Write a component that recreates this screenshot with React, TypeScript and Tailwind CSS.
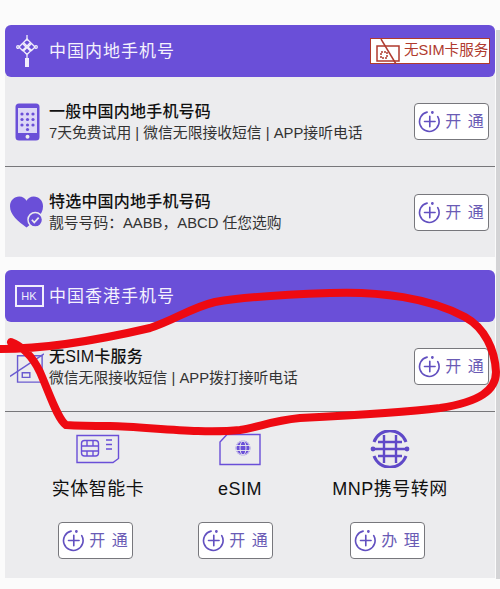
import React from "react";

const PURPLE = "#6a4fd8";

function PlusCircle() {
  return (
    <svg width="23" height="23" viewBox="0 0 24 24" fill="none" stroke="#6250c0" strokeWidth="1.7" strokeLinecap="round">
      <path d="M9.500 2.200A10.200 10.200 0 1 0 20.600 7" />
      <circle cx="15" cy="2.600" r="0.600" fill="#6250c0" />
      <path d="M12.300 6.500v11M6.800 12h11" />
    </svg>
  );
}

function OpenBtn({ label = "开 通" }: { label?: string }) {
  return (
    <button className="w-[75px] h-[37px] shrink-0 flex items-center justify-center gap-[4px] bg-white border border-[#77777c] rounded-[4px] text-[#6a5bb5] text-[16px] tracking-[1px]">
      <PlusCircle />
      <span className="pt-[1px]">{label}</span>
    </button>
  );
}

function Row({ icon, title, sub, divider }: { icon: React.ReactNode; title: string; sub: string; divider?: boolean }) {
  return (
    <div className={`h-[90px] flex items-center pl-[5px] pr-[6px] ${divider ? "border-b border-[#77777a]" : ""}`}>
      <div className="w-[34px] flex justify-center shrink-0">{icon}</div>
      <div className="ml-[5px] flex-1 min-w-0">
        <div className="pt-[1px] text-[16px] tracking-[0.2px] leading-[22px] font-medium text-[#111]">{title}</div>
        <div className="text-[14.8px] leading-[21px] text-[#333] whitespace-nowrap">{sub}</div>
      </div>
      <OpenBtn />
    </div>
  );
}

function Header({ icon, title, right }: { icon: React.ReactNode; title: string; right?: React.ReactNode }) {
  return (
    <div className="h-[52px] rounded-[6px] flex items-center pl-[5px] pr-[5px]" style={{ backgroundColor: PURPLE }}>
      <div className="w-[34px] flex justify-center shrink-0">{icon}</div>
      <div className="ml-[5px] pt-[1px] flex-1 text-[17px] tracking-[1px] text-[#f4f2fd]">{title}</div>
      {right}
    </div>
  );
}

function KnotIcon() {
  return (
    <svg width="22" height="32" viewBox="0 0 22 32" fill="none" stroke="#f1eefc" strokeWidth="1.300">
      <path d="M11 0v6M11 20v3" />
      <path d="M11 4l3.500 3.500L11 11 7.500 7.500zM6.500 8.500L10 12l-3.500 3.500L3 12zM15.500 8.500L19 12l-3.500 3.500L12 12zM11 12.500l3.500 3.500L11 19.500 7.500 16z" />
      <circle cx="2" cy="12" r="1.300" />
      <circle cx="20" cy="12" r="1.300" />
      <rect x="9" y="23" width="4" height="9" fill="#f1eefc" stroke="none" />
    </svg>
  );
}

function PhoneIcon() {
  return (
    <svg width="25" height="38" viewBox="0 0 25 38">
      <rect x="0.500" y="0.500" width="24" height="37" rx="3.500" fill={PURPLE} />
      <rect x="3" y="5" width="19" height="25" fill="#dcd7f6" />
      {[0, 1, 2].map((r) =>
        [0, 1, 2].map((c) => <circle key={`${r}${c}`} cx={7 + c * 5.5} cy={11 + r * 5.5} r="1.600" fill={PURPLE} />)
      )}
      <circle cx="12.500" cy="26.500" r="1.600" fill={PURPLE} />
      <circle cx="12.500" cy="33.800" r="2" fill="#ececee" />
    </svg>
  );
}

function HeartIcon() {
  return (
    <svg width="35" height="33" viewBox="0 0 35 33">
      <path d="M17 32C8 25 0 19 0 10 0 4 4.500 0 9.500 0 13 0 15.500 1.800 17 4.500 18.500 1.800 21 0 24.500 0 29.500 0 34 4 34 10 34 19 26 25 17 32z" fill={PURPLE} />
      <circle cx="26" cy="24" r="7.500" fill="#6a4fd8" stroke="#ececee" strokeWidth="1.500" />
      <path d="M22.500 24l2.500 2.800 4.500-5" stroke="#ececee" strokeWidth="1.800" fill="none" />
    </svg>
  );
}

function NoSimIcon() {
  return (
    <svg width="36" height="36" viewBox="0 0 36 36" fill="none" stroke="#6a5bd0" strokeWidth="1.500">
      <path d="M8 6h26v28H8zM13 24h8v5h-8z" />
      <path d="M0 28L36 4" />
    </svg>
  );
}

function SimIcon() {
  return (
    <svg width="44" height="30" viewBox="0 0 44 30" fill="none" stroke="#6a4fd8" strokeWidth="1.400">
      <path d="M1 1.500h41.500v23L37 28.500H1z" />
      <rect x="5.500" y="6.500" width="17" height="15.500" rx="3" />
      <path d="M5.500 12h17M5.500 17h17M11 6.500V12M17 6.500V12M11 17v5M17 17v5" />
      <path d="M30 6h6M30 10.500h6M30 15h6" />
    </svg>
  );
}

function ESimIcon() {
  return (
    <svg width="42" height="33" viewBox="0 0 42 33" fill="none" stroke="#6a4fd8" strokeWidth="1.400">
      <path d="M8 1.500H41v30H1V9z" />
      <circle cx="24" cy="15" r="7.500" fill="#6a4fd8" stroke="none" />
      <g stroke="#ececee" strokeWidth="0.900">
        <circle cx="24" cy="15" r="7" />
        <ellipse cx="24" cy="15" rx="3" ry="7" />
        <path d="M17 12.500h14M17 17.500h14" />
      </g>
    </svg>
  );
}

function GlobeIcon() {
  return (
    <svg width="40" height="38" viewBox="0 0 40 38" fill="none" stroke="#5f49c8" strokeWidth="2.600">
      <path d="M4 12A17 17 0 0 1 36 12M36 26A17 17 0 0 1 4 26" strokeWidth="3" />
      <path d="M14 5v28M26 5v28M8 12h24M3 19h34M8 26h24" strokeWidth="2.400" />
      <circle cx="3" cy="19" r="2.400" fill="#5f49c8" stroke="none" />
      <circle cx="37" cy="19" r="2.400" fill="#5f49c8" stroke="none" />
    </svg>
  );
}

function Bottom({ icon, label, btn, btnClass }: { icon: React.ReactNode; label: string; btn?: string; btnClass: string }) {
  return (
    <div className="flex flex-col items-center">
      <div className="h-[40px] flex items-center">{icon}</div>
      <div className="mt-[5px] h-[30px] leading-[30px] text-[18px] tracking-[0.5px] text-[#111] whitespace-nowrap">{label}</div>
      <div className={`mt-[18px] ${btnClass}`}>
        <OpenBtn label={btn} />
      </div>
    </div>
  );
}

export default function App() {
  return (
    <div
      className="relative w-[500px] h-[589px] overflow-hidden bg-[#fbfbfb] pt-[25px] pl-[5px]"
      style={{ fontFamily: '"Liberation Sans", "Noto Sans CJK SC", sans-serif' }}
    >
      <div className="w-[490px] bg-[#ececee] rounded-t-[6px]">
        <Header
          icon={<KnotIcon />}
          title="中国内地手机号"
          right={
            <div className="w-[120px] h-[26px] bg-white border border-[#b03a2e] flex items-center pl-[5px] gap-[4px] text-[#b03a2e] text-[14.6px] whitespace-nowrap">
              <svg width="24" height="25" viewBox="0 0 24 25" fill="none" stroke="#b03a2e" strokeWidth="1.500" className="shrink-0">
                <path d="M1 7h22v15H1z" />
                <path d="M5 13h6v6H5z" strokeDasharray="2 1" />
                <path d="M5 0l15 25" />
              </svg>
              <span>无SIM卡服务</span>
            </div>
          }
        />
        <Row icon={<PhoneIcon />} title="一般中国内地手机号码" sub="7天免费试用 | 微信无限接收短信 | APP接听电话" divider />
        <Row icon={<HeartIcon />} title="特选中国内地手机号码" sub="靓号号码：AABB，ABCD 任您选购" />
      </div>

      <div className="w-[490px] mt-[13px] pb-[19px] bg-[#ececee] rounded-t-[6px]">
        <Header
          icon={
            <div className="w-[29px] h-[22px] ml-[4px] border-2 border-[#f1eefc] flex items-center justify-center text-[11px] font-medium text-[#f1eefc] leading-none">
              HK
            </div>
          }
          title="中国香港手机号"
        />
        <Row icon={<NoSimIcon />} title="无SIM卡服务" sub="微信无限接收短信 | APP拨打接听电话" divider />
        <div className="grid grid-cols-[186px_98px_202px] pt-[17px]">
          <Bottom icon={<SimIcon />} label="实体智能卡" btnClass="mr-[5px]" />
          <Bottom icon={<ESimIcon />} label="eSIM" btnClass="mr-[9px]" />
          <Bottom icon={<GlobeIcon />} label="MNP携号转网" btn="办 理" btnClass="mr-[5px]" />
        </div>
      </div>

      <div className="absolute top-[30px] bottom-[10px] right-0 w-[4px] bg-[#d4d4d6]" />

      <svg className="absolute inset-0 pointer-events-none" width="500" height="589" viewBox="0 0 500 589" fill="none">
        <path
          d="M0 349C40 349 90 342 150 328C175 320 190 308 215 302C250 296 300 294 330 293C380 291 430 298 465 317C485 328 495 350 496 372C496 390 480 402 440 408C400 413 340 416 300 418C270 421 260 427 240 430C200 434 150 427 110 426C95 426 80 426 66 425C58 420 50 395 40 372C32 355 20 345 11 342"
          stroke="#ee0a12"
          strokeWidth="8"
          strokeLinecap="round"
          strokeLinejoin="round"
        />
      </svg>
    </div>
  );
}
